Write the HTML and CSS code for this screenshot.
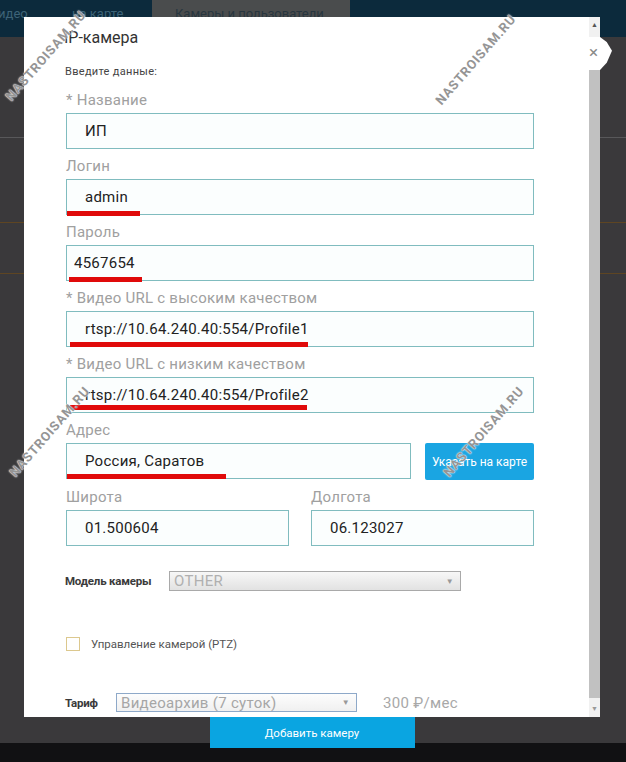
FILE: index.html
```html
<html>
<head>
	<meta charset="utf-8">
	<link rel="stylesheet" href="styles.css">
</head>
<body>
	<div class="page">
		<nav class="topnav">
			<span class="tab tab-video">Видео</span>
			<span class="tab tab-map">на карте</span>
			<span class="tab active">Камеры и пользователи</span>
		</nav>
		<div class="rows">
			<div class="row row-a"></div>
			<div class="row row-b"></div>
			<div class="row row-c"></div>
		</div>
		<div class="footer"></div>
	</div>

	<div class="modal">
		<div class="dialog">
			<div class="dialog-body">
				<div class="title">IP-камера</div>
				<div class="intro">Введите данные:</div>

				<form class="form">
					<div class="group">
						<label>* Название</label>
						<div class="field"><input value="ИП"></div>
					</div>
					<div class="group">
						<label>Логин</label>
						<div class="field"><input value="admin"><span class="mark mark-login"></span></div>
					</div>
					<div class="group">
						<label>Пароль</label>
						<div class="field"><input class="tight" value="4567654"><span class="mark mark-pass"></span></div>
					</div>
					<div class="group">
						<label>* Видео URL с высоким качеством</label>
						<div class="field"><input value="rtsp://10.64.240.40:554/Profile1"><span class="mark mark-url1"></span></div>
					</div>
					<div class="group">
						<label>* Видео URL с низким качеством</label>
						<div class="field"><input value="rtsp://10.64.240.40:554/Profile2"><span class="mark mark-url2"></span></div>
					</div>
					<div class="group">
						<label>Адрес</label>
						<div class="address">
							<div class="field field-address"><input value="Россия, Саратов"><span class="mark mark-addr"></span></div>
							<button type="button" class="map-btn">Указать на карте</button>
						</div>
					</div>
					<div class="group coords">
						<div class="coord">
							<label>Широта</label>
							<div class="field"><input value="01.500604"></div>
						</div>
						<div class="coord">
							<label>Долгота</label>
							<div class="field"><input value="06.123027"></div>
						</div>
					</div>

					<div class="line model-line">
						<span class="line-label model-label">Модель камеры</span>
						<div class="select model-select"><span>OTHER</span><i>▼</i></div>
					</div>

					<div class="line ptz-line">
						<span class="checkbox"></span>
						<span class="ptz-label">Управление камерой (PTZ)</span>
					</div>

					<div class="line tariff-line">
						<span class="line-label tariff-label">Тариф</span>
						<div class="select tariff-select"><span>Видеоархив (7 суток)</span><i>▼</i></div>
						<span class="price">300 ₽/мес</span>
					</div>
				</form>
			</div>
			<div class="scrollbar">
				<div class="sb-top"><i>▲</i></div>
				<div class="sb-thumb"></div>
				<div class="sb-bottom"><i>▼</i></div>
			</div>
			<div class="close">×</div>
		</div>
		<button type="button" class="add-btn">Добавить камеру</button>
	</div>

	<!-- watermarks -->
	<span class="wm wm-1">NASTROISAM.RU</span>
	<span class="wm wm-2">NASTROISAM.RU</span>
	<span class="wm wm-3">NASTROISAM.RU</span>
	<span class="wm wm-4">NASTROISAM.RU</span>
</body>
</html>
```

FILE: styles.css
```css
body {
	margin: 0;
	width: 626px;
	height: 762px;
	overflow: hidden;
	position: relative;
	background: #3a393b;
	font-family: Roboto, "Liberation Sans", sans-serif;
}

/* page behind the dialog */
.page {
	display: flex;
	flex-direction: column;
	height: 762px;
}
.topnav {
	height: 37px;
	background: #0c2a3c;
	display: flex;
	align-items: flex-start;
	font-size: 13px;
	line-height: 28px;
	color: #3d6377;
	overflow: hidden;
}
.tab {
	white-space: nowrap;
}
.tab-video {
	width: 72px;
	text-indent: -10px;
}
.tab-map {
	width: 80px;
}
.tab.active {
	background: #4a4c4d;
	color: #28363f;
	width: 175px;
	height: 37px;
	padding-left: 23px;
}
.rows {
	flex: 1;
}
.row-a {
	height: 100px;
	border-bottom: 1px solid #58585a;
}
.row-b {
	height: 84px;
	border-bottom: 1px solid #5e4522;
}
.row-c {
	height: 50px;
	border-bottom: 1px solid #5e4522;
}
.footer {
	height: 19px;
	background: #111113;
}

/* dialog */
.modal {
	position: absolute;
	left: 24px;
	top: 17px;
	width: 576px;
	display: flex;
	flex-direction: column;
	align-items: center;
}
.dialog {
	width: 576px;
	height: 700px;
	background: #fff;
	display: flex;
	position: relative;
}
.dialog-body {
	flex: 1;
	padding-top: 11px;
}
.title {
	margin-left: 40px;
	font-size: 16px;
	line-height: 20px;
	color: #333;
}
.intro {
	margin: 16px 0 0 41px;
	font-size: 11px;
	letter-spacing: 0.3px;
	line-height: 16px;
	color: #444;
}
.form {
	margin: 10px 0 0 42px;
	width: 468px;
}
.group {
	margin-bottom: 7px;
}
label {
	display: block;
	height: 20px;
	line-height: 20px;
	margin-bottom: 3px;
	font-size: 15px;
	letter-spacing: 0.25px;
	color: #a0a0a0;
}
.field {
	position: relative;
}
input {
	display: block;
	box-sizing: border-box;
	width: 100%;
	height: 36px;
	margin: 0;
	padding: 0 0 0 18px;
	border: 1px solid #80bcbf;
	background: #fbfefe;
	font-family: Roboto, "Liberation Sans", sans-serif;
	font-size: 15px;
	letter-spacing: 0.25px;
	color: #222;
	outline: none;
}
input.tight {
	padding-left: 7px;
}
.mark {
	position: absolute;
	height: 5px;
	bottom: -1px;
	background: #e00a0a;
}
.mark-login { left: 1px; width: 73px; }
.mark-pass { left: 3px; width: 73px; }
.mark-url1 { left: 4px; width: 238px; bottom: 0; }
.mark-url2 { left: 4px; width: 237px; bottom: 3px; }
.mark-addr { left: 1px; width: 159px; bottom: 1px; }

.address {
	display: flex;
	gap: 14px;
}
.field-address {
	width: 345px;
}
.map-btn {
	flex: 1;
	height: 37px;
	border: 0;
	border-radius: 2px;
	background: #1aa5e2;
	color: #fff;
	font-family: Roboto, "Liberation Sans", sans-serif;
	font-size: 12px;
	padding: 0;
}
.coords {
	display: flex;
	gap: 22px;
}
.coord {
	flex: 1;
}

.line {
	display: flex;
	align-items: center;
}
.line-label {
	margin-left: -1px;
	font-size: 11.5px;
	letter-spacing: -0.2px;
	font-weight: bold;
	color: #3a3a3a;
}
.model-line {
	padding-top: 18px;
}
.model-label {
	width: 104px;
}
.select {
	box-sizing: border-box;
	height: 20px;
	display: flex;
	align-items: center;
	justify-content: space-between;
	padding: 0 6px 0 4px;
	font-size: 15px;
	letter-spacing: 0.3px;
	color: #b0b0b0;
}
.select i {
	font-style: normal;
	font-size: 8px;
	color: #999;
}
.model-select {
	width: 292px;
	border: 1px solid #a9a9a9;
	background: linear-gradient(#f7f7f7, #e2e2e2);
}
.ptz-line {
	margin-top: 46px;
}
.checkbox {
	box-sizing: border-box;
	width: 14px;
	height: 14px;
	border: 1px solid #dcc88e;
}
.ptz-label {
	margin-left: 11px;
	font-size: 11.5px;
	color: #555;
}
.tariff-line {
	margin-top: 42px;
}
.tariff-label {
	width: 51px;
}
.tariff-select {
	width: 241px;
	height: 19px;
	border: 1px solid #8ea9c9;
	background: linear-gradient(#fdfdfd, #f0f0f0);
	color: #a6a6a6;
}
.price {
	margin-left: 26px;
	font-size: 15px;
	letter-spacing: 0.3px;
	color: #a8a8a8;
}

/* scrollbar */
.scrollbar {
	width: 11px;
	display: flex;
	flex-direction: column;
	background: #f1f1f1;
}
.scrollbar i {
	display: block;
	font-style: normal;
	font-size: 7px;
	line-height: 8px;
	text-align: center;
	color: #555;
}
.sb-top {
	height: 46px;
	padding-top: 4px;
	box-sizing: border-box;
}
.sb-thumb {
	flex: 1;
	background: #c1c1c1;
}
.sb-bottom {
	height: 19px;
	padding-top: 7px;
	box-sizing: border-box;
}
.sb-bottom i {
	color: #999;
}
.close {
	position: absolute;
	left: 564px;
	top: 20px;
	width: 24px;
	height: 33px;
	background: #fff;
	clip-path: polygon(0 0, 50% 0, 78% 15%, 100% 42%, 78% 78%, 50% 100%, 0 100%);
	font-size: 17px;
	line-height: 31px;
	color: #8a8a8a;
	padding-left: 1px;
	box-sizing: border-box;
}

.add-btn {
	width: 205px;
	height: 31px;
	border: 0;
	padding: 0;
	background: #0aa5e1;
	color: #fff;
	font-family: Roboto, "Liberation Sans", sans-serif;
	font-size: 11.5px;
}

/* watermarks */
.wm {
	position: absolute;
	width: 140px;
	margin-left: -70px;
	margin-top: -8px;
	text-align: center;
	font-size: 13px;
	font-weight: bold;
	line-height: 16px;
	letter-spacing: 0.8px;
	color: #959595;
	text-shadow: 0 0 2px #fff, 0 0 1px #fff;
	transform: rotate(-49deg);
}
.wm-1 { left: 46px; top: 56px; }
.wm-2 { left: 476px; top: 60px; }
.wm-3 { left: 50px; top: 432px; }
.wm-4 { left: 484px; top: 432px; }
```
